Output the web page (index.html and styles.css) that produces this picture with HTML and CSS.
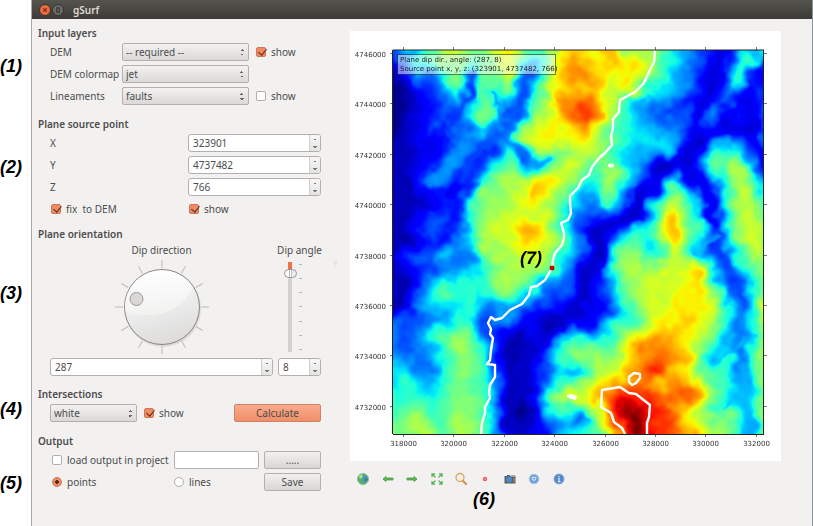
FILE: index.html
```html
<!DOCTYPE html>
<html lang="en">
<head>
<meta charset="utf-8">
<title>gSurf</title>
<link rel="stylesheet" href="styles.css">
</head>
<body>
<div class="page">
  <aside class="notes">
    <span>(1)</span><span>(2)</span><span>(3)</span><span>(4)</span><span>(5)</span>
  </aside>
  <div class="window">
    <header class="titlebar">
      <button class="dot close" aria-label="Close"><svg viewBox="0 0 12 12"><path d="M4 4l4 4M8 4l-4 4"/></svg></button>
      <button class="dot" aria-label="Maximize"><svg viewBox="0 0 12 12"><path d="M4.500 3.500h3v5h-3z"/></svg></button>
      <h1>gSurf</h1>
    </header>
    <main class="content">
      <form class="panel">
        <section>
          <h2>Input layers</h2>
          <div class="rows layers">
            <label for="dem">DEM</label>
            <select id="dem"><option>-- required --</option></select>
            <label class="check"><input type="checkbox" checked>show</label>
            <label for="cmap">DEM colormap</label>
            <select id="cmap"><option>jet</option></select>
            <span></span>
            <label for="lin">Lineaments</label>
            <select id="lin"><option>faults</option></select>
            <label class="check"><input type="checkbox">show</label>
          </div>
        </section>
        <section>
          <h2>Plane source point</h2>
          <div class="rows source">
            <label for="px">X</label>
            <div class="spin"><input id="px" type="number" value="323901"><span class="steps"><button type="button" aria-label="Increase X"></button><button type="button" aria-label="Decrease X"></button></span></div>
            <label for="py">Y</label>
            <div class="spin"><input id="py" type="number" value="4737482"><span class="steps"><button type="button" aria-label="Increase Y"></button><button type="button" aria-label="Decrease Y"></button></span></div>
            <label for="pz">Z</label>
            <div class="spin"><input id="pz" type="number" value="766"><span class="steps"><button type="button" aria-label="Increase Z"></button><button type="button" aria-label="Decrease Z"></button></span></div>
            <label class="check inset"><input type="checkbox" checked>fix&nbsp; to DEM</label>
            <label class="check inset"><input type="checkbox" checked>show</label>
          </div>
        </section>
        <section>
          <h2>Plane orientation</h2>
          <div class="rows orient">
            <div class="knob">
              <label for="dir">Dip direction</label>
              <svg class="dial" viewBox="-50 -50 100 100" aria-hidden="true">
                <defs>
                  <linearGradient id="face" x1="0.300" y1="0" x2="0.600" y2="1"><stop offset="0" stop-color="#fff"/><stop offset="1" stop-color="#dcdbda"/></linearGradient>
                  <linearGradient id="gloss" x1="0" y1="0" x2="0" y2="1"><stop offset="0" stop-color="#fff"/><stop offset="1" stop-color="#f5f4f3"/></linearGradient>
                </defs>
                <g id="dial-ticks" stroke="#bdbbb8"></g>
                <circle cx="1" cy="2" r="38" fill="#cfcdca" opacity=".6"/>
                <circle r="37.500" fill="url(#face)" stroke="#858483"/>
                <path d="M-37 4A37 37 0 0 1 30 -21C26 0 -6 16-37 4Z" fill="url(#gloss)" opacity=".75"/>
                <circle cx="-25.500" cy="-8" r="6.500" fill="#d9d8d7" stroke="#9b9a99"/>
              </svg>
            </div>
            <div class="knob">
              <label for="dip">Dip angle</label>
              <div class="slider">
                <input id="dip" type="range" min="0" max="90" value="8">
                <span class="marks"><i></i><i></i><i></i><i></i><i></i><i></i><i></i></span>
              </div>
            </div>
            <div class="spin"><input id="dir" type="number" value="287"><span class="steps"><button type="button" aria-label="Increase direction"></button><button type="button" aria-label="Decrease direction"></button></span></div>
            <div class="spin"><input type="number" value="8" aria-label="Dip angle value"><span class="steps"><button type="button" aria-label="Increase angle"></button><button type="button" aria-label="Decrease angle"></button></span></div>
          </div>
        </section>
        <section>
          <h2>Intersections</h2>
          <div class="rows inter">
            <select aria-label="Intersection colour"><option>white</option></select>
            <label class="check"><input type="checkbox" checked>show</label>
            <button type="button" class="primary">Calculate</button>
          </div>
        </section>
        <section>
          <h2>Output</h2>
          <div class="rows output">
            <label class="check inset"><input type="checkbox">load output in project</label>
            <input class="text" type="text" aria-label="Output file">
            <button type="button">.....</button>
            <label class="check inset"><input type="radio" name="kind" checked>points</label>
            <label class="check"><input type="radio" name="kind">lines</label>
            <button type="button">Save</button>
          </div>
        </section>
      </form>
      <div class="grip"></div>
      <div class="view">
        <svg class="plot" viewBox="0 0 431 430" role="img" aria-label="Elevation map with plane intersections">
          <foreignObject x="43" y="19" width="371" height="384"><canvas id="relief" width="371" height="384"></canvas></foreignObject>
          <g id="axes"></g>
          <g transform="translate(43 19)">
            <g class="trace">
              <path d="M262 0L261 12L257 20L251 33L242 42L227 50L226 62L220 69L220 78L218 87L219 95L212 103L207 107L199 117L196 125L189 130L185 138L177 146L177 153L178 163L175 170L168 173L171 183L171 188L169 195L162 203L160 210L159 218L152 230L144 236L138 237L136 245L129 254L117 260L109 268L102 270L98 267L95 273L98 279L97 284L100 288L98 300L97 310L94 314L102 315L102 327L97 335L96 343L97 348L92 357L92 363L89 373L88 384"/>
              <path d="M232 384L229 378L221 372L218 363L208 357L209 340L227 337L236 343L243 344L257 355L256 367L254 373L254 384"/>
              <path d="M241 323L247 324L247 328L243 333L239 335L236 332L236 327Z"/>
            </g>
            <ellipse cx="218" cy="115.500" rx="3" ry="2" fill="#fff"/>
            <path d="M174 345l4-1 6 2-1 4-5-1-4-2z" fill="#fff"/>
            <rect class="source-mark" x="157" y="216" width="4" height="4" rx="1"/>
            <rect class="info-box" x="4.500" y="4.500" width="158" height="20"/>
            <text class="info" x="7" y="12">Plane dip dir., angle: (287, 8)</text>
            <text class="info" x="7" y="21">Source point x, y, z: (323901, 4737482, 766)</text>
            <text class="note" x="127" y="214">(7)</text>
          </g>
          <path class="frame" d="M43 403.500H414M42.500 19V403M43 19H414M413.500 19V403"/>
        </svg>
        <nav class="tools" aria-label="Map tools">
          <button aria-label="Full extent"><svg viewBox="0 0 16 16"><circle cx="8" cy="8" r="5.500" fill="#5bae5e" stroke="#8bbd92"/><path d="M8 4l4 1 1 4-3 3-3-2 1-3z" fill="#4a8fd0"/><path d="M4 5l3-2 1 3-3 2z" fill="#a5e08f"/><path d="M10 7l3 1-2 3z" fill="#2f8a3c"/></svg></button>
          <button aria-label="Back"><svg viewBox="0 0 16 16"><path d="M3 8l3-2.500v1.500h7v2H6v1.500z" fill="#5cc052" stroke="#3f8a3a" stroke-width=".7"/></svg></button>
          <button aria-label="Forward"><svg viewBox="0 0 16 16"><path d="M13 8l-3-2.500v1.500H3v2h7v1.500z" fill="#5cc052" stroke="#3f8a3a" stroke-width=".7"/></svg></button>
          <button aria-label="Zoom to layer"><svg viewBox="0 0 16 16" fill="none" stroke="#58b45c" stroke-width="1.300"><path d="M3 6V3h3M10 3h3v3M13 10v3h-3M6 13H3v-3M3 3l3.500 3.500M13 3l-3.500 3.500M13 13l-3.500-3.500M3 13l3.500-3.500"/></svg></button>
          <button aria-label="Zoom"><svg viewBox="0 0 16 16"><circle cx="7" cy="6.500" r="4" fill="#f4efe6" stroke="#d9a866" stroke-width="1.300"/><path d="M10 10l3 3" stroke="#cf9654" stroke-width="2.300" stroke-linecap="round"/></svg></button>
          <button aria-label="Set source point"><svg viewBox="0 0 16 16"><circle cx="8" cy="8" r="2.200" fill="#f25a58"/><circle cx="8" cy="8" r=".8" fill="#ffb4b0"/></svg></button>
          <button aria-label="Save image"><svg viewBox="0 0 16 16"><path d="M3 5h2V4h3v1h5.500v7.500H2.500V5z" fill="#5d5e60"/><path d="M9 4h4v2H9z" fill="#aaa69f"/><circle cx="7" cy="8.500" r="3" fill="#4a8bcf"/><path d="M11 7h2v4h-2z" fill="#7d7c7a"/></svg></button>
          <button aria-label="Help"><svg viewBox="0 0 16 16"><circle cx="8" cy="8" r="4.800" fill="#6fa0dc" stroke="#a9c4e6"/><path d="M5.500 6.500Q8 5 10.500 6.500Q10.500 9 8 10Q5.500 9 5.500 6.500Z" fill="#d9e8f8"/><path d="M6.500 7h3L8 9z" fill="#5f92d2"/></svg></button>
          <button aria-label="About"><svg viewBox="0 0 16 16"><circle cx="8" cy="8" r="5" fill="#5389c9" stroke="#86a9d6"/><path d="M8 5v1.300M7 7.500h1v3M7 10.700h2.500" stroke="#e2edf9" stroke-width="1.200" fill="none"/></svg></button>
        </nav>
        <p class="note tools-note">(6)</p>
      </div>
    </main>
  </div>
</div>
<script src="map.js"></script>
</body>
</html>
```
FILE: styles.css
```css
* { box-sizing: border-box; }
body {
  margin: 0;
  background: #fff;
  color: #4c4c4c;
  font-family: "Noto Sans", "Open Sans", sans-serif;
  font-size: 10px;
  line-height: 14px;
}
.page {
  --sections: 91px 110px 160px 47px 1fr;
  display: grid;
  grid-template-columns: 31px 1fr;
  min-height: 100vh;
}
.notes {
  display: grid;
  grid-template-rows: var(--sections);
  padding-top: 26px;
}
.notes span, .note {
  color: #000;
  font: italic bold 18px/20px "Liberation Sans", sans-serif;
}
.notes span { padding-top: 30px; }
.notes span:nth-child(2) { padding-top: 40px; }
.notes span:nth-child(3) { padding-top: 56px; }
.notes span:nth-child(4) { padding-top: 12px; }
.notes span:nth-child(5) { padding-top: 39px; }
.window {
  background: #f2f1f0;
  border-left: 1px solid #a9a8a6;
  border-right: 1px solid #8b9696;
  display: flex;
  flex-direction: column;
}
.titlebar {
  height: 19px;
  display: flex;
  align-items: center;
  gap: 1px;
  padding-left: 7px;
  background: linear-gradient(#55544e, #3c3b37);
}
.titlebar h1 {
  margin: 0 0 0 8px;
  font-size: 10px;
  font-weight: 600;
  color: #dfdbd2;
}
.dot {
  width: 12px;
  height: 12px;
  padding: 0;
  border: 1px solid #35342f;
  border-radius: 50%;
  background: #6b6a64;
  display: flex;
}
.dot svg { width: 100%; fill: none; stroke: #3c3b37; stroke-width: 1.5; }
.dot.close { background: #ee6a40; }
.dot.close svg { stroke: #7c2a10; }
.content {
  flex: 1;
  display: grid;
  grid-template-columns: 289px 28px 1fr;
}
.panel {
  display: grid;
  grid-template-rows: var(--sections);
  padding: 7px 0 0 6px;
}
h2 { margin: 0; font-size: 10px; line-height: 14px; font-weight: 600; }
.rows {
  display: grid;
  align-items: center;
  row-gap: 4px;
  grid-auto-rows: 18px;
  padding: 3px 0 0 12px;
}
.layers { grid-template-columns: 72px 127px 1fr; }
.layers .check { padding-left: 7px; }
.source { grid-template-columns: 138px 1fr; }
.check { display: flex; align-items: center; gap: 5px; white-space: nowrap; }
.inset { padding-left: 2px; }
.source .inset { padding-left: 1px; }
select, button, input { font: inherit; color: inherit; margin: 0; }
select {
  appearance: none;
  width: 100%;
  height: 18px;
  padding: 0 16px 0 3px;
  border: 1px solid #b2b0ae;
  border-radius: 2px;
  background:
    conic-gradient(from 135deg at 50% 0, #666 90deg, transparent 0) right 4px bottom 4px / 4px 2px no-repeat,
    linear-gradient(#f3f2f1, #dad9d8);
  background:
    conic-gradient(from 135deg at 50% 0, #666 90deg, transparent 0) right 4px top 5px / 4px 2px no-repeat,
    conic-gradient(from -45deg at 50% 100%, #666 90deg, transparent 0) right 4px bottom 4px / 4px 2px no-repeat,
    linear-gradient(#f3f2f1, #dad9d8);
}
.rows > button {
  height: 18px;
  padding: 0;
  border: 1px solid #b2b0ae;
  border-radius: 2px;
  background: linear-gradient(#f2f1f0, #d8d7d6);
}
.rows > .primary { background: linear-gradient(#f9ab8b, #f18e68); border-color: #c98468; }
input[type="checkbox"], input[type="radio"] {
  appearance: none;
  width: 10px;
  height: 10px;
  border: 1px solid #b0aeac;
  border-radius: 2px;
  background: #fff;
}
input[type="radio"] { border-radius: 50%; }
input[type="checkbox"]:checked {
  border-color: #c9785a;
  background: #f08a62;
  position: relative;
}
input[type="checkbox"]:checked::after {
  content: "";
  position: absolute;
  left: 3px;
  top: -1px;
  width: 4px;
  height: 7px;
  border: solid #5b2a18;
  border-width: 0 1px 1px 0;
  transform: rotate(40deg);
}
input[type="radio"]:checked {
  border-color: #c9785a;
  background: radial-gradient(circle, #5b2a18 0 2px, #f08a62 2px);
}
.spin {
  display: flex;
  height: 18px;
  border: 1px solid #b2b0ae;
  border-radius: 3px;
  background: #fff;
  overflow: hidden;
}
.spin input {
  flex: 1;
  min-width: 0;
  padding: 0 4px;
  border: 0;
  background: none;
  appearance: textfield;
}
.spin input::-webkit-inner-spin-button { display: none; }
.steps {
  display: flex;
  flex-direction: column;
  width: 11px;
  border-left: 1px solid #d0cfcd;
  background: linear-gradient(#f8f7f6, #e4e3e2);
}
.steps button {
  flex: 1;
  padding: 0;
  border: 0;
}
.steps button:first-child {
  background: conic-gradient(from 135deg at 50% 0, #777 90deg, transparent 0) center / 4px 2px no-repeat;
}
.steps button:last-child {
  background: conic-gradient(from -45deg at 50% 100%, #777 90deg, transparent 0) center / 4px 2px no-repeat;
}
.orient {
  grid-template-columns: 1fr 43px;
  grid-template-rows: 110px 18px;
  column-gap: 5px;
  row-gap: 5px;
  padding-top: 2px;
}
.knob {
  align-self: start;
  display: flex;
  flex-direction: column;
  align-items: center;
  white-space: nowrap;
}
.dial { width: 100px; height: 100px; overflow: visible; }
.slider { display: flex; align-items: center; padding-top: 5px; margin-right: 14px; }
.slider input {
  appearance: none;
  writing-mode: vertical-lr;
  width: 14px;
  height: 90px;
  background: linear-gradient(#ee7443 0 8px, #d3d1cf 8px) center / 4px 100% no-repeat;
}
.slider input::-webkit-slider-thumb {
  appearance: none;
  width: 13px;
  height: 9px;
  border: 1px solid #999795;
  border-radius: 5px;
  background: linear-gradient(90deg, #fff 4px, #bbb 4px 5px, #fff 5px 6px, #bbb 6px 7px, #eee 7px);
}
.marks { display: flex; flex-direction: column; justify-content: space-between; height: 86px; margin-left: 2px; }
.marks i { width: 3px; height: 1px; background: #bab8b5; }
.inter { grid-template-columns: 87px 1fr 87px; }
.inter .check { padding-left: 7px; }
.output { grid-template-columns: 124px 85px 1fr; }
.output > button { width: 57px; justify-self: end; }
.text { width: 100%; height: 18px; border: 1px solid #b2b0ae; border-radius: 2px; background: #fff; }
.grip {
  width: 3px;
  height: 5px;
  margin: 242px 0 0 13px;
  background: repeating-linear-gradient(#dedcda 0 1px, transparent 1px 2px);
}
.view { padding: 12px 31px 0 1px; }
.plot { display: block; width: 100%; height: auto; background: #fff; }
.plot canvas { display: block; }
.plot text {
  font-family: "DejaVu Sans", sans-serif;
  font-size: 7px;
  fill: #333;
  text-rendering: geometricPrecision;
}
.plot text.note { font: italic bold 18px "Liberation Sans", sans-serif; fill: #000; }
.plot .info { fill: #222; }
.info-box { fill: #fff; fill-opacity: .5; stroke: #000; stroke-opacity: .5; }
.trace { fill: none; stroke: #fff; stroke-width: 2.4; stroke-linejoin: round; }
.source-mark { fill: #e60000; stroke: #600; stroke-width: .5; }
.frame { fill: none; stroke: #222; }
.ticks { fill: none; stroke: #777; }
.tools {
  display: grid;
  grid-template-columns: repeat(9, 1fr);
  width: 220px;
  margin: 10px 0 0 1px;
}
.tools button { padding: 0; border: 0; background: none; display: flex; justify-content: center; }
.tools svg { width: 16px; height: 16px; }
.tools-note { margin: 2px 0 0 123px; }
```
FILE: map.js
```javascript
// Elevations on a regular grid, one base-36 digit per node, in steps of 1/20.
const GRID = [
  "468ac caacd c99de ddebb b9764 32768",
  "2478a a89bc 76adf ededd b8754 23783",
  "12558 a69ac 669df feddd a8653 24842",
  "01346 8498a 57bde eecdb 87653 24743",
  "01234 65975 48bff gec97 55432 34224",
  "01234 47a84 69beg heb86 54443 52325",
  "01243 45865 9bdde fc987 65534 32214",
  "11223 55456 acdcd dba87 77631 46535",
  "11223 54348 4abab cb976 66523 88843",
  "11235 53479 769bc a9a76 41214 99b62",
  "11355 338ab bbdcb 88b85 43522 78b94",
  "11233 25aab cedb9 67a62 36a73 38bb6",
  "11123 37abb ddba7 55851 59c95 27bb9",
  "11244 38bbc ccc95 44312 6bea7 37bca",
  "11343 48bcc eec95 31257 8ceb8 46acb",
  "11233 57bbc ddca6 41489 7ada6 36acb",
  "13446 559bb ccb86 416ab 89c96 448bb",
  "12345 568ab bba75 227bb acccd 7479a",
  "11368 788bb a9654 136ab cccdd 9548a",
  "11479 8879a 86443 1359b ccddd b847a",
  "12567 78566 54331 2247a ccddd c847d",
  "44456 87455 32112 23789 cdded b858d",
  "54579 a9532 12135 458bc deedc a758b",
  "54569 b9731 12479 989cf ffeda 8658b",
  "65568 aa831 1258a abadf fgfeb 6858b",
  "76558 aa841 12476 8bcef hheda 9857a",
  "78768 a9851 12689 bdefg fefed 9866a",
  "88878 aa951 139bc cegih hggge a767a",
  "89989 aa951 02798 9bfjj ihfeb 8977a",
  "9ab99 ba951 12456 5aeik ihgdc aa86a",
  "aabb9 bb962 12367 89chk ihgef ca86b"
].map(row => row.replace(/ /g, ""));
const STEP = 12.8;

// Valleys and ridges: elevation, half width, points in plot pixels.
const LINES = [
  [.07, 6, [329,0, 326,20, 321,40, 309,62, 301,78, 298,92, 291,108, 272,112, 261,137, 249,142, 242,163, 221,172, 206,183, 206,190, 201,205, 192,230, 181,255, 154,283, 127,310, 121,340, 121,384]],
  [.09, 5, [299,90, 314,83, 327,80, 344,76, 339,62]],
  [.1, 5, [359,37, 351,53, 354,67, 361,87, 369,107]],
  [.1, 5, [291,117, 302,127, 311,143, 319,170, 322,185]],
  [.18, 5, [321,182, 326,200, 339,223, 342,250]],
  [.25, 5, [342,250, 347,280, 349,313]],
  [.31, 5, [349,313, 351,333, 351,384]],
  [.3, 3, [347,292, 336,300, 327,308]],
  [.3, 3, [347,290, 358,288]],
  [.32, 3, [346,345, 331,357]],
  [.3, 4, [321,187, 311,193, 302,205]],
  [.2, 5, [137,23, 132,43, 124,57, 112,70, 111,83, 91,93, 81,110, 69,130]],
  [.24, 4, [111,83, 119,97, 131,107, 144,113, 156,107]],
  [.26, 3, [112,70, 101,50, 97,42]],
  [.18, 4, [81,25, 79,40, 71,50, 61,70, 56,84]],
  [.27, 5, [79,87, 64,103, 54,120, 36,133]]
];

const clamp = (v, a, b) => Math.max(a, Math.min(b, v));

function node(i, j) {
  const row = GRID[clamp(j, 0, GRID.length - 1)];
  return parseInt(row[clamp(i, 0, row.length - 1)], 36) / 20;
}

function cubic(a, b, c, d, t) {
  return b + .5 * t * (c - a + t * (2 * a - 5 * b + 4 * c - d + t * (3 * (b - c) + d - a)));
}

function elevation(x, y) {
  const gx = x / STEP, gy = y / STEP, i = Math.floor(gx), j = Math.floor(gy);
  const r = [-1, 0, 1, 2].map(k => cubic(node(i - 1, j + k), node(i, j + k), node(i + 1, j + k), node(i + 2, j + k), gx - i));
  return cubic(r[0], r[1], r[2], r[3], gy - j);
}

function hash(i, j) {
  let n = Math.imul(i, 374761393) + Math.imul(j, 668265263);
  n = Math.imul(n ^ (n >>> 13), 1274126177);
  return ((n ^ (n >>> 16)) >>> 0) / 4294967295 - .5;
}

function noise(x, y) {
  const i = Math.floor(x), j = Math.floor(y);
  let u = x - i, v = y - j;
  u = u * u * (3 - 2 * u);
  v = v * v * (3 - 2 * v);
  const a = hash(i, j) * (1 - u) + hash(i + 1, j) * u;
  const b = hash(i, j + 1) * (1 - u) + hash(i + 1, j + 1) * u;
  return a * (1 - v) + b * v;
}

function distance(px, py, p) {
  let best = 1e9;
  for (let k = 0; k + 3 < p.length; k += 2) {
    const dx = p[k + 2] - p[k], dy = p[k + 3] - p[k + 1];
    const t = clamp(((px - p[k]) * dx + (py - p[k + 1]) * dy) / (dx * dx + dy * dy), 0, 1);
    best = Math.min(best, Math.hypot(px - p[k] - t * dx, py - p[k + 1] - t * dy));
  }
  return best;
}

function ramp(v, stops) {
  let k = 0;
  while (k < stops.length - 2 && v > stops[k + 1][0]) k++;
  const [x0, y0] = stops[k], [x1, y1] = stops[k + 1];
  return 255 * (y0 + (y1 - y0) * (v - x0) / (x1 - x0));
}
const RED = [[0, 0], [.35, 0], [.66, 1], [.89, 1], [1, .5]];
const GREEN = [[0, 0], [.125, 0], [.375, 1], [.64, 1], [.91, 0], [1, 0]];
const BLUE = [[0, .5], [.11, 1], [.34, 1], [.65, 0], [1, 0]];

const canvas = document.getElementById("relief");
const ctx = canvas.getContext("2d");
const image = ctx.createImageData(canvas.width, canvas.height);
for (let y = 0; y < canvas.height; y++) {
  for (let x = 0; x < canvas.width; x++) {
    const wx = x + 9 * noise(x / 11, y / 11) + 3 * noise(x / 5 + 50, y / 5);
    const wy = y + 9 * noise(x / 11 + 90, y / 11 + 30) + 3 * noise(x / 5, y / 5 + 70);
    let h = elevation(wx, wy);
    for (const [level, width, points] of LINES) {
      const d = distance(wx, wy, points);
      if (d < width * 2.5) h += (level - h) * .75 * Math.exp(-d * d / (width * width));
    }
    h += .03 * noise(x / 6 + 11, y / 6) * (h > .15 ? 1 : .4);
    h = clamp(h, .01, 1);
    const o = 4 * (y * canvas.width + x);
    image.data[o] = ramp(h, RED);
    image.data[o + 1] = ramp(h, GREEN);
    image.data[o + 2] = ramp(h, BLUE);
    image.data[o + 3] = 255;
  }
}
ctx.putImageData(image, 0, 0);

const SVG = "http://www.w3.org/2000/svg";
function add(parent, tag, attrs, text) {
  const el = document.createElementNS(SVG, tag);
  for (const k in attrs) el.setAttribute(k, attrs[k]);
  if (text) el.textContent = text;
  parent.appendChild(el);
}
const axes = document.getElementById("axes");
for (let k = 0; k < 8; k++) {
  const x = 53.5 + Math.round(k * 50.4), y = 22.5 + Math.round(k * 50.4);
  add(axes, "path", { class: "ticks", d: `M${x} 16v3M${x} 403v3M40 ${y}h3M414 ${y}h3` });
  add(axes, "text", { x, y: 415, "text-anchor": "middle" }, String(318000 + 2000 * k));
  add(axes, "text", { x: 36, y: y + 3, "text-anchor": "end" }, String(4746000 - 2000 * k));
}

const ticks = document.getElementById("dial-ticks");
for (let k = 0; k < 12; k++) {
  add(ticks, "path", { d: "M0 -39V-47", transform: `rotate(${k * 30})` });
}
```
